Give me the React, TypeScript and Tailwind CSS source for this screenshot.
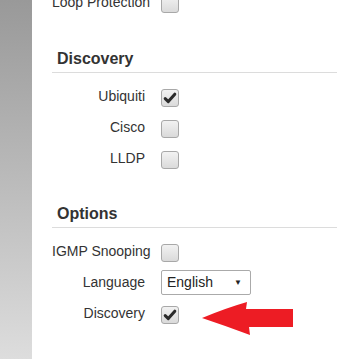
import React from 'react';

function Check({ checked }: { checked?: boolean }) {
  return (
    <div className="w-[18px] h-[18px] shrink-0 rounded-[3px] border border-[#a8a8a8] bg-linear-to-b from-[#f2f2f2] to-[#dadada] flex items-center justify-center">
      {checked && (
        <svg width="14" height="14" viewBox="0 0 14 14">
          <path d="M2.2 7.6 L5.3 10.6 L11.8 3.2" fill="none" stroke="#2b2b2b" strokeWidth="3" strokeLinejoin="round" strokeLinecap="round" />
        </svg>
      )}
    </div>
  );
}

function Row({ label, children, className = '' }: { label: string; children: React.ReactNode; className?: string }) {
  return (
    <div className={`flex items-start ${className}`}>
      <div className="w-[93px] shrink-0 text-right leading-[16px] -mt-px text-[14px] text-[#333] whitespace-nowrap">{label}</div>
      <div className="ml-[16px]">{children}</div>
    </div>
  );
}

function Heading({ title, className = '' }: { title: string; className?: string }) {
  return (
    <div className={className}>
      <div className="pl-[5px] text-[16px] leading-[18px] font-bold text-[#333]">{title}</div>
      <div className="mt-[4px] h-px bg-[#dcdcdc]" />
    </div>
  );
}

export default function App() {
  return (
    <div className="relative flex w-[337px] h-[359px] overflow-hidden bg-white" style={{ fontFamily: '"Liberation Sans", Arial, sans-serif' }}>
      <div className="w-[32px] shrink-0 bg-linear-to-b from-[#999999] to-[#dddddd]" />
      <div className="flex-1 pl-[20px]">
        {/* options above, scrolled out */}
        <Row label="Loop Protection" className="-mt-[5px]">
          <Check />
        </Row>

        <Heading title="Discovery" className="mt-[37px]" />
        <Row label="Ubiquiti" className="mt-[16px]">
          <Check checked />
        </Row>
        <Row label="Cisco" className="mt-[13px]">
          <Check />
        </Row>
        <Row label="LLDP" className="mt-[13px]">
          <Check />
        </Row>

        <Heading title="Options" className="mt-[36px]" />
        <Row label="IGMP Snooping" className="mt-[16px]">
          <Check />
        </Row>
        <div className="flex items-center mt-[8px]">
          <div className="w-[93px] shrink-0 text-right text-[14px] leading-[16px] -mt-[2px] text-[#333]">Language</div>
          <div className="ml-[16px] w-[90px] h-[25px] border border-[#aaa] rounded-[2px] bg-white flex items-center justify-between pl-[5px] pr-[8px] text-[14px] text-[#222]">
            <span>English</span>
            <span className="text-[8px] leading-none">▼</span>
          </div>
        </div>
        <Row label="Discovery" className="mt-[11px]">
          <Check checked />
        </Row>
      </div>

      {/* red annotation arrow */}
      <svg className="absolute left-0 top-0" width="337" height="359" viewBox="0 0 337 359">
        <path
          d="M202 318 Q226 308 247 302 L246 309 L293 309 L293 327 L249 327 L250 335 Q226 326 202 318 Z"
          fill="#ed1c24"
        />
      </svg>
    </div>
  );
}
